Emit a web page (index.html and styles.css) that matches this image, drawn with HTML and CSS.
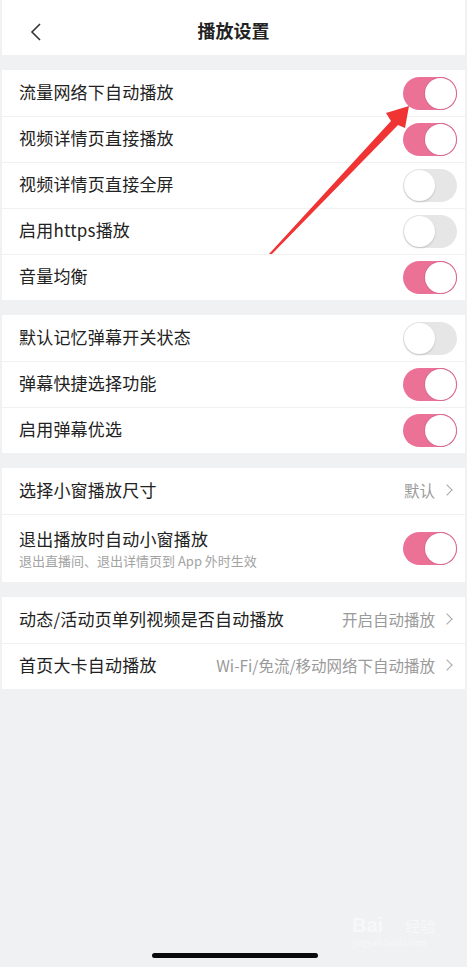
FILE: index.html
```html
<!DOCTYPE html>
<html lang="zh">
<head>
    <meta charset="utf-8">
    <title>播放设置</title>
    <link rel="stylesheet" href="styles.css">
</head>
<body>

<div class="page">

<div class="topbar">
    <svg class="back" width="14" height="20" viewBox="0 0 14 20">
        <path d="M11 2 L3 10 L11 18" fill="none" stroke="#333" stroke-width="1.6"/>
    </svg>
    <h1>播放设置</h1>
</div>

<div class="group">
    <div class="row"><span class="label">流量网络下自动播放</span><span class="switch on"></span></div>
    <div class="row"><span class="label">视频详情页直接播放</span><span class="switch on"></span></div>
    <div class="row"><span class="label">视频详情页直接全屏</span><span class="switch"></span></div>
    <div class="row"><span class="label">启用https播放</span><span class="switch"></span></div>
    <div class="row"><span class="label">音量均衡</span><span class="switch on"></span></div>
</div>

<div class="group">
    <div class="row"><span class="label">默认记忆弹幕开关状态</span><span class="switch"></span></div>
    <div class="row"><span class="label">弹幕快捷选择功能</span><span class="switch on"></span></div>
    <div class="row"><span class="label">启用弹幕优选</span><span class="switch on"></span></div>
</div>

<div class="group">
    <div class="row"><span class="label">选择小窗播放尺寸</span><span class="value">默认<i class="more"></i></span></div>
    <div class="row tall">
        <div>
            <div class="label">退出播放时自动小窗播放</div>
            <div class="hint">退出直播间、退出详情页到 App 外时生效</div>
        </div>
        <span class="switch on"></span>
    </div>
</div>

<div class="group">
    <div class="row"><span class="label">动态/活动页单列视频是否自动播放</span><span class="value">开启自动播放<i class="more"></i></span></div>
    <div class="row"><span class="label">首页大卡自动播放</span><span class="value">Wi-Fi/免流/移动网络下自动播放<i class="more"></i></span></div>
</div>

</div>

<!-- annotation arrow drawn over the list -->
<svg class="arrow" width="467" height="300" viewBox="0 0 467 300">
    <polygon points="269,254 391,121 386,113 409,106 405,128 398,125 272,254" fill="#f03434"/>
</svg>

<div class="mark">Bai<span>经验</span><small>jingyan.baidu.com</small></div>
<div class="homebar"></div>

</body>
</html>
```

FILE: styles.css
```css
html, body {margin: 0; padding: 0;}
body {background: #f0f1f3; font-family: "Noto Sans CJK SC", "Noto Sans", sans-serif; color: #222; width: 467px; height: 967px; position: relative; overflow: hidden;}

.page {padding: 0 2px;}

.topbar {height: 55px; background: #fff; display: flex; align-items: center; justify-content: center; position: relative;}
.topbar h1 {margin: 0; font-size: 18px; font-weight: bold; color: #222; padding-top: 4px;}
.back {position: absolute; left: 27px; top: 22px;}

.group {background: #fff; margin-top: 15px;}

.row {height: 46px; display: flex; align-items: center; justify-content: space-between; padding: 0 8px 0 17px; border-top: 1px solid #f1f1f1; box-sizing: border-box;}
.row:first-child {border-top: none;}
.row.tall {height: 68px;}
.row > .label, .row > .value {margin-bottom: 3px;}

.label {font-size: 17px; line-height: 22px; letter-spacing: 0.2px;}
.hint {font-size: 13px; color: #a3a3a3; margin-top: 2px; line-height: 17px;}

.value {font-size: 15.5px; color: #9a9a9a; display: flex; align-items: center; padding-right: 6px;}
.more {display: inline-block; width: 7px; height: 7px; border-top: 1.3px solid #a8a8a8; border-right: 1.3px solid #a8a8a8; transform: rotate(45deg); margin-left: 8px;}

.switch {width: 54px; height: 33px; border-radius: 17px; background: #e6e6e6; position: relative; box-sizing: border-box; flex: none;}
.switch::after {content: ""; position: absolute; top: 1px; left: 1px; width: 31px; height: 31px; border-radius: 50%; background: #fff; box-shadow: 0 1px 2px rgba(0,0,0,0.18);}
.switch.on {background: #eb7197;}
.switch.on::after {left: 22px; box-shadow: 0 0 0 1px #d96a8e;}

.arrow {position: absolute; left: 0; top: 0;}

.mark {position: absolute; left: 352px; top: 914px; color: #f7f8f9; font-size: 20px; font-family: "Liberation Sans", sans-serif; font-weight: bold;}
.mark span {font-size: 15px; margin-left: 22px; font-weight: normal; font-family: "Noto Sans CJK SC", sans-serif;}
.mark small {display: block; font-size: 10px; font-weight: normal; font-family: "Liberation Serif", serif;}

.homebar {position: absolute; left: 152px; top: 953px; width: 166px; height: 5px; border-radius: 3px; background: #0a0a0a;}
```
